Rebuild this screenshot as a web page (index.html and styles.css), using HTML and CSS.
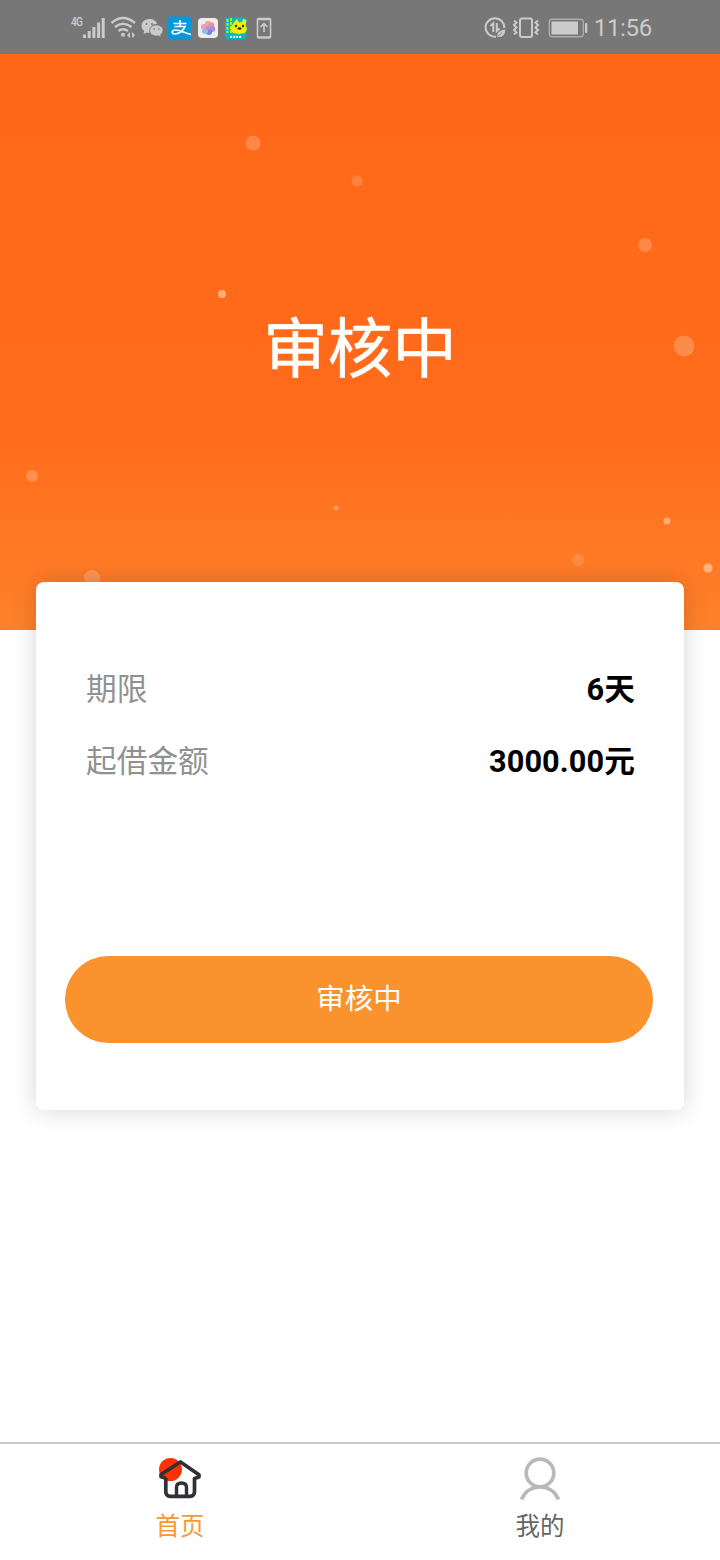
FILE: index.html
```html
<!DOCTYPE html>
<html lang="zh-CN">
<head>
<meta charset="utf-8">
<title>首页</title>
<link rel="stylesheet" href="styles.css">
</head>
<body>
<div class="screen">
  <header class="status">
    <div class="status-group">
      <span class="network">4G</span>
      <svg width="22" height="20" viewBox="0 0 22 20" fill="#cbcbcb"><rect y="16.500" width="3" height="3.500"/><rect x="4.700" y="13" width="3" height="7"/><rect x="9.400" y="9" width="3" height="11"/><rect x="14.100" y="4.500" width="3" height="15.500"/><rect x="18.700" width="3" height="20"/></svg>
      <svg class="wifi" width="28" height="28" viewBox="0 0 28 28" fill="none" stroke="#cbcbcb" stroke-width="2.400"><path d="M1.500 9Q13 -1 25 9M5 13Q13 6.500 21.500 13M8.500 17Q13 13.500 18 17"/><circle cx="13" cy="20.800" r="2" fill="#cbcbcb" stroke="none"/><path d="M20 18v6l-3-3zM22 18v6l3-3z" fill="#cbcbcb" stroke="none"/></svg>
      <svg width="28" height="28" viewBox="0 0 28 28" fill="#cbcbcb"><path d="M11.500 5C6.500 5 3.500 8 3.500 12q0 3 2.700 5l-.6 3 3-1.500q1.500.5 3 .4C10.500 13 15 9.500 19 10 18.500 7 15.500 5 11.500 5z"/><path d="M18.500 11c-4 0-6.800 2.400-6.800 5.500s3 5.500 6.800 5.500l2-.3 2.700 1.500-.6-2.300Q25 19 25 16.500C25 13.300 22.200 11 18.500 11z" stroke="#777" stroke-width=".7"/><g fill="#777"><circle cx="8.500" cy="10" r="1"/><circle cx="14" cy="10" r="1"/><circle cx="16.300" cy="15" r=".8"/><circle cx="21" cy="15" r=".8"/></g></svg>
      <svg width="28" height="28" viewBox="0 0 28 28"><rect x="2" y="2.500" width="24" height="23" rx="3" fill="#0798db"/><path d="M7.500 9.500h13M14 6v6.500M8.500 12.500h10.500C17.500 16.500 13 20 9 20c-4 0-3.500-4 .5-4 4.500 0 8.500 2.800 15.500 4.500" fill="none" stroke="#fff" stroke-width="1.700"/></svg>
      <svg width="28" height="28" viewBox="0 0 28 28"><rect x="4" y="4" width="20" height="20" rx="4" fill="#ededeb"/><g opacity=".8"><circle cx="14" cy="9.800" r="3" fill="#f6a070"/><circle cx="17.300" cy="11.300" r="3" fill="#e58097"/><circle cx="18.200" cy="15" r="3" fill="#a36ed6"/><circle cx="15" cy="18" r="3" fill="#596ddb"/><circle cx="11" cy="17" r="3" fill="#6bbaf0"/><circle cx="10" cy="13" r="3" fill="#e487bb"/><circle cx="14" cy="14" r="2.300" fill="#ab79d0"/></g></svg>
      <svg width="28" height="28" viewBox="0 0 28 28"><rect x="3" y="3.500" width="21.500" height="21.500" rx="3" fill="#08b8c7"/><path d="M5.500 5v14M9 4v15" stroke="#a9ed26" stroke-width="2" stroke-dasharray="3 1"/><path d="M11 10l2-3 2-2 2 3.500 3-.5 1-3 3.500 1-1 5 1.500 4-2 4-6 1-6-1-3-5z" fill="#f7ef00"/><circle cx="14" cy="12" r="1.200" fill="#332b06"/><circle cx="21" cy="12" r="1.200" fill="#332b06"/><ellipse cx="17.500" cy="14.500" rx="2" ry="1.300" fill="#332b06"/><path d="M8 22.800h12" stroke="#fff" stroke-width="1.700" stroke-dasharray="2 1"/></svg>
      <svg width="28" height="28" viewBox="0 0 28 28" fill="none" stroke="#cbcbcb" stroke-width="1.600"><rect x="7.500" y="4.500" width="13" height="19.500" rx="1"/><path d="M7 5.500h14M7 23h14"/><path d="M14 18V10M10.500 13L14 9.500l3.500 3.500"/></svg>
    </div>
    <div class="status-group">
      <svg width="28" height="28" viewBox="0 0 28 28" fill="none" stroke="#cbcbcb" stroke-width="2"><path d="M23.200 14A9.300 9.300 0 1 0 15 22.700"/><path d="M9.300 12l3-2.500V18M15.800 9v8l2.800-2.500"/><path d="M16 23q0-7 8.300-7.500Q24 24 16 23z" fill="#cbcbcb" stroke="none"/><path d="M16.500 22.500l4.500-4" stroke="#777" stroke-width=".8"/></svg>
      <svg class="vibrate" width="28" height="28" viewBox="0 0 28 28" fill="none" stroke="#cbcbcb" stroke-width="2"><rect x="8" y="4.500" width="12" height="18.500" rx="2"/><path d="M2 6.500l2.500 2L2 11l2.500 2.500L2 16l2.500 2.500L2 20.500M26 6.500l-2.500 2L26 11l-2.500 2.500L26 16l-2.500 2.500 2.500 2"/></svg>
      <svg width="40" height="20" viewBox="0 0 40 20"><rect x="1.300" y="1.300" width="34" height="17.500" rx="3" fill="none" stroke="#aaa" stroke-width="1.400"/><rect x="3.500" y="3.500" width="26.500" height="13" fill="#cbcbcb"/><rect x="37" y="5" width="2.300" height="10" rx="1" fill="#cbcbcb"/></svg>
      <time class="clock">11:56</time>
    </div>
  </header>

  <section class="hero">
    <svg class="bubbles" width="720" height="576" viewBox="0 54 720 576" fill="#ffd0ae">
      <circle cx="253" cy="143" r="7.500" opacity=".3"/><circle cx="357" cy="181" r="5.500" opacity=".25"/><circle cx="645" cy="245" r="7" opacity=".3"/><circle cx="222" cy="294" r="4" opacity=".65"/><circle cx="684" cy="346" r="10.500" opacity=".32"/><circle cx="32" cy="476" r="6" opacity=".33"/><circle cx="336" cy="508" r="2.500" opacity=".4"/><circle cx="667" cy="521" r="3.500" opacity=".6"/><circle cx="578" cy="560" r="6.500" opacity=".2"/><circle cx="708" cy="568" r="4.500" opacity=".65"/><circle cx="92" cy="578" r="8" opacity=".3"/>
    </svg>
    <h1 class="hero-title">审核中</h1>
  </section>

  <main class="card">
    <dl class="details">
      <div class="row"><dt>期限</dt><dd>6天</dd></div>
      <div class="row"><dt>起借金额</dt><dd>3000.00元</dd></div>
    </dl>
    <button class="action">审核中</button>
  </main>

  <nav class="tabs">
    <a class="tab tab-active">
      <svg width="48" height="48" viewBox="0 0 48 48"><circle cx="14.500" cy="13.500" r="11.500" fill="#fc3203"/><path d="M9.800 22V35.500q0 4.800 4.500 4.800h19.700q4.500 0 4.500-4.800V22.500l4.500-1.500v-2.300L24.500 6 5 18.500v2.300l4.800 1.500" fill="none" stroke="#303036" stroke-width="3.700" stroke-linejoin="round"/><path d="M20.500 40V31.500q0-4.500 5-4.500t5 4.500V40" fill="none" stroke="#303036" stroke-width="3.400"/></svg>
      <span>首页</span>
    </a>
    <a class="tab">
      <svg width="48" height="48" viewBox="0 0 48 48" fill="none" stroke="#b9b9b9" stroke-width="3.700"><circle cx="24" cy="17" r="13.800"/><path d="M5.500 43.500Q11 31 24 31T42.500 43.500"/></svg>
      <span>我的</span>
    </a>
  </nav>
</div>
</body>
</html>
```
FILE: styles.css
```css
* { box-sizing: border-box; }
body { margin: 0; background: #fff; font-family: Roboto, "Noto Sans CJK SC", sans-serif; }
svg { display: block; flex: none; }
.screen { width: 720px; height: 1560px; display: flex; flex-direction: column; }
.status { height: 54px; flex: none; background: #777; display: flex; justify-content: space-between; padding: 1px 68px 0 71px; color: #cbcbcb; }
.status-group { display: flex; align-items: center; }
.network { width: 12px; height: 26px; font-size: 12px; line-height: 15px; font-weight: 500; letter-spacing: -.8px; transform: scaleX(.85); transform-origin: left; }
.wifi { margin-left: 5px; }
.vibrate { margin: 0 8px 0 3px; }
.clock { font-size: 24px; line-height: 30px; margin-left: 6px; padding-top: 1px; letter-spacing: -.3px; }
.hero { height: 576px; flex: none; display: grid; justify-items: center; background: linear-gradient(180deg, #ff6819 0%, #ff6b1b 65%, #ff812b 100%); }
.bubbles, .hero-title { grid-area: 1 / 1; }
.hero-title { margin: 249px 0 0; color: #fff; font-size: 64.500px; line-height: 94px; font-weight: 400; -webkit-text-stroke: .5px #fff; }
.card { position: relative; height: 528px; flex: none; margin: -48px 36px 0; padding: 72px 31px 67px 29px; background: #fff; border-radius: 8px; box-shadow: 0 0 24px rgba(0, 0, 0, .17); display: flex; flex-direction: column; justify-content: space-between; }
.details { margin: 0; padding: 0 18px 0 21px; }
.row { height: 72px; display: flex; justify-content: space-between; font-size: 30.700px; line-height: 72px; }
dt { color: #919191; }
dd { margin: 0; color: #000; font-weight: 700; letter-spacing: .1px; }
.action { height: 87px; border: 0; border-radius: 44px; padding: 1px 0 0; background: #fa932d; color: #fff; font: 28.500px/40px Roboto, "Noto Sans CJK SC", sans-serif; }
.tabs { margin-top: auto; height: 118px; border-top: 2px solid #c9c9c9; display: flex; }
.tab { flex: 1; display: flex; flex-direction: column; align-items: center; padding-top: 12px; color: #666; font-size: 24.500px; line-height: 36px; }
.tab span { margin-top: 5px; }
.tab-active { color: #f59a32; }
```
